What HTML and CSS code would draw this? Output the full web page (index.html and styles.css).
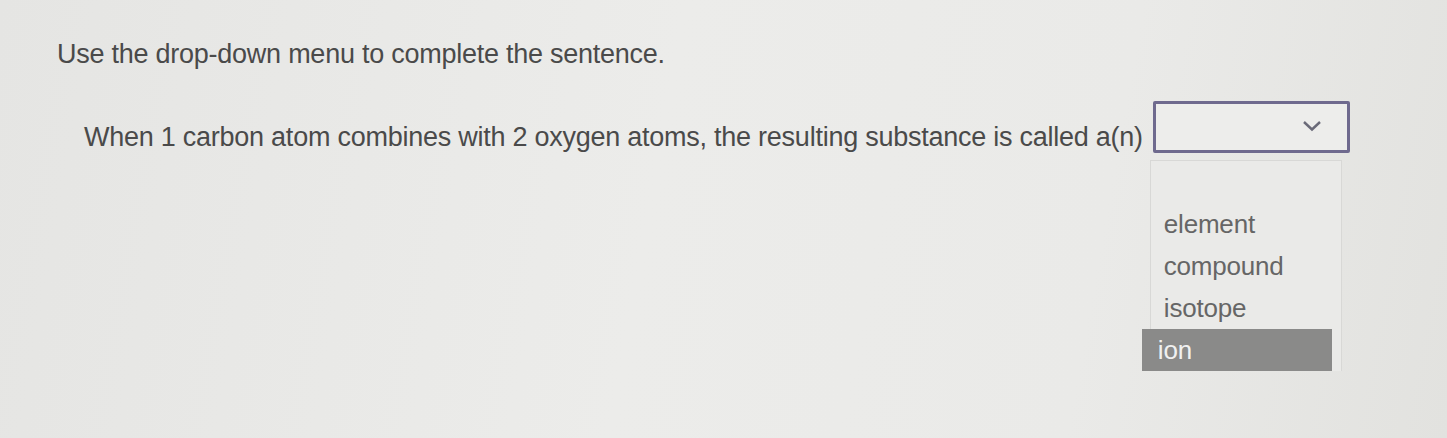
FILE: index.html
```html
<!DOCTYPE html>
<html>
<head>
<meta charset="utf-8">
<link rel="stylesheet" href="styles.css">
</head>
<body>
<div class="page">
  <p class="prompt">Use the drop-down menu to complete the sentence.</p>
  <div class="question">
    <span class="qtext">When 1 carbon atom combines with 2 oxygen atoms, the resulting substance is called a(n)</span>
    <span class="selectwrap">
      <span class="select">
        <svg class="chev" width="22" height="13" viewBox="0 0 22 13"><path d="M3 3 L11 10.5 L19 3" fill="none" stroke="#6a6a78" stroke-width="2.4"/></svg>
      </span>
      <ul class="menu">
        <li class="opt blank">&nbsp;</li>
        <li class="opt">element</li>
        <li class="opt">compound</li>
        <li class="opt">isotope</li>
        <li class="opt active">ion</li>
      </ul>
    </span>
  </div>
</div>
</body>
</html>
```
FILE: styles.css
```css
html, body {
  margin: 0;
  padding: 0;
  height: 100%;
}
body {
  background: linear-gradient(100deg, #e5e5e3 0%, #ececea 45%, #eaeae8 75%, #e2e2df 100%);
  font-family: "Liberation Sans", Arial, sans-serif;
  color: #4a4a4a;
  overflow: hidden;
}
.page {
  padding: 38px 0 0 57px;
}
.prompt {
  margin: 0;
  font-size: 27px;
  line-height: 32px;
  letter-spacing: -0.25px;
}
.question {
  margin-top: 51px;
  padding-left: 27px;
  display: flex;
  align-items: center;
  gap: 10px;
}
.qtext {
  font-size: 27px;
  line-height: 32px;
  letter-spacing: -0.25px;
}
.selectwrap {
  position: relative;
  display: block;
  margin-top: -20px;
}
.select {
  display: flex;
  align-items: center;
  justify-content: flex-end;
  box-sizing: border-box;
  width: 197px;
  height: 52px;
  border: 3px solid #6f6a8e;
  border-radius: 2px;
  background: #ededeb;
  padding-right: 24px;
}
.chev {
  display: block;
  margin-top: -4px;
}
.menu {
  position: absolute;
  top: 59px;
  left: -3px;
  width: 190px;
  margin: 0;
  padding: 0;
  list-style: none;
  border: 1px solid #d8d8d6;
  border-bottom: none;
  background: #eaeae8;
}
.opt {
  height: 42px;
  line-height: 42px;
  padding-left: 13px;
  font-size: 26px;
  color: #666;
  letter-spacing: -0.2px;
}
.opt.active {
  background: #8a8a89;
  color: #f0f0f0;
  margin-left: -9px;
  margin-right: 9px;
  padding-left: 16px;
}
```
